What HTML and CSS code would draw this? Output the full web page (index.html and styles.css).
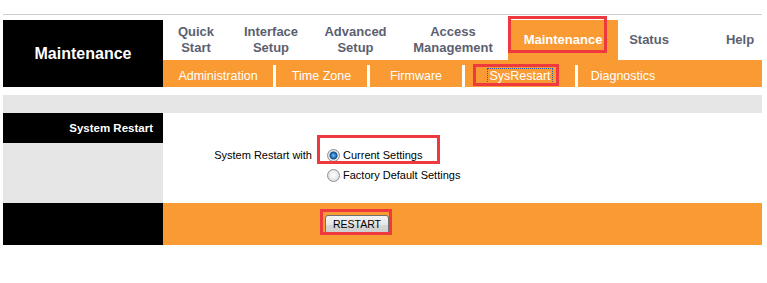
FILE: index.html
```html
<!DOCTYPE html>
<html>
<head>
<meta charset="utf-8">
<title>Maintenance</title>
<link rel="stylesheet" href="styles.css">
</head>
<body>
<div class="page">
  <div class="topline"></div>
  <div class="header">
    <div class="title">Maintenance</div>
    <div class="navcol">
      <div class="mainnav">
        <div class="tab t-quick">Quick<br>Start</div>
        <div class="tab t-iface">Interface<br>Setup</div>
        <div class="tab t-adv">Advanced<br>Setup</div>
        <div class="tab t-access">Access<br>Management</div>
        <div class="tab t-maint active">Maintenance</div>
        <div class="tab t-status">Status</div>
        <div class="spacer"></div>
        <div class="tab t-help">Help</div>
      </div>
      <div class="subnav">
        <div class="sub s-admin">Administration</div>
        <div class="sep"></div>
        <div class="sub s-time">Time Zone</div>
        <div class="sep"></div>
        <div class="sub s-fw">Firmware</div>
        <div class="sep"></div>
        <div class="sub s-sys"><span class="focus">SysRestart</span></div>
        <div class="sep"></div>
        <div class="sub s-diag">Diagnostics</div>
      </div>
    </div>
  </div>
  <div class="band"></div>
  <div class="section">
    <div class="sec-left"><div class="sec-title">System Restart</div></div>
    <div class="sec-right">
      <div class="form">
        <div class="lbl">System Restart with</div>
        <label class="opt"><input type="radio" name="rs" class="radio" checked><span>Current Settings</span></label>
        <div class="lbl"></div>
        <label class="opt"><input type="radio" name="rs" class="radio"><span>Factory Default Settings</span></label>
      </div>
    </div>
  </div>
  <div class="footer">
    <div class="foot-left"></div>
    <div class="foot-right"><button class="btn">RESTART</button></div>
  </div>
  <div class="mark m1"></div>
  <div class="mark m2"></div>
  <div class="mark m3"></div>
  <div class="mark m4"></div>
</div>
</body>
</html>
```
FILE: styles.css
```css
html, body {
  margin: 0;
  padding: 0;
  background: #fff;
}
body {
  font-family: "Liberation Sans", Arial, sans-serif;
}
.page {
  position: relative;
  margin-left: 3px;
  width: 759px;
  padding-top: 14px;
}
.topline {
  height: 1px;
  background: #cfcfcf;
  margin-bottom: 5px;
}
.header {
  display: flex;
  height: 67px;
}
.title {
  width: 160px;
  background: #000;
  color: #fff;
  font-weight: bold;
  font-size: 16px;
  display: flex;
  align-items: center;
  justify-content: center;
}
.navcol {
  flex: 1;
  display: flex;
  flex-direction: column;
}
.mainnav {
  height: 40px;
  display: flex;
}
.tab {
  display: flex;
  align-items: center;
  justify-content: center;
  text-align: center;
  font-weight: bold;
  font-size: 13px;
  line-height: 16px;
  color: #5c5f70;
}
.t-quick { width: 66px; }
.t-iface { width: 84px; }
.t-adv { width: 85px; }
.t-access { width: 110px; }
.t-maint { width: 110px; }
.t-status { width: 62px; }
.t-help { width: 44px; }
.spacer { flex: 1; }
.tab.active {
  background: #fa9a33;
  color: #fff;
}
.subnav {
  height: 27px;
  box-sizing: border-box;
  padding-top: 5px;
  background: #fa9a33;
  display: flex;
}
.sub {
  display: flex;
  align-items: center;
  justify-content: center;
  color: #fff;
  font-size: 12.5px;
}
.s-admin { width: 110px; }
.s-time { width: 91px; }
.s-fw { width: 92px; }
.s-sys { width: 110px; }
.s-diag { width: 90px; }
.sep {
  width: 3px;
  background: #fff;
}
.focus {
  outline: 1px dotted #2a5cb0;
  outline-offset: 0;
  padding: 0 1px;
}
.band {
  margin-top: 8px;
  height: 18px;
  background: #e6e6e6;
}
.section {
  display: flex;
  height: 90px;
}
.sec-left {
  width: 160px;
  background: #e6e6e6;
}
.sec-title {
  height: 30px;
  line-height: 30px;
  background: #000;
  color: #fff;
  font-weight: bold;
  font-size: 11.5px;
  text-align: right;
  padding-right: 10px;
}
.sec-right {
  flex: 1;
  padding-top: 32px;
  box-sizing: border-box;
}
.form {
  display: grid;
  grid-template-columns: 149px 1fr;
  column-gap: 14px;
  grid-auto-rows: 20px;
  font-size: 11px;
  color: #000;
}
.lbl {
  text-align: right;
  display: flex;
  align-items: center;
  justify-content: flex-end;
}
.opt {
  display: flex;
  align-items: center;
}
.radio {
  -webkit-appearance: none;
  appearance: none;
  width: 13px;
  height: 13px;
  margin: 0 3px 0 1px;
  border-radius: 50%;
  border: 1px solid #8e8f8f;
  box-sizing: border-box;
  background: radial-gradient(circle at 50% 45%, #ffffff 0, #f0f0f0 40%, #cfcfcf 100%);
}
.radio:checked {
  background: radial-gradient(circle at 50% 50%, #7fc4f4 0, #1f6fb6 2.5px, #12508a 3.5px, #e8e8e8 4.5px, #d0d0d0 100%);
}
.footer {
  display: flex;
  height: 42px;
}
.foot-left {
  width: 160px;
  background: #000;
}
.foot-right {
  flex: 1;
  background: #fa9a33;
  display: flex;
  align-items: center;
  padding-left: 162px;
}
.btn {
  width: 64px;
  height: 19px;
  padding: 0;
  font-family: "Liberation Sans", Arial, sans-serif;
  font-size: 10.5px;
  color: #000;
  border: 1px solid #707070;
  border-radius: 3px;
  background: linear-gradient(#f4f4f4, #e6e6e6 50%, #d6d6d6 51%, #cfcfcf);
}
.mark {
  position: absolute;
  border: 3px solid #ee3a3f;
  box-sizing: border-box;
}
.m1 { left: 505px; top: 16px; width: 99px; height: 37px; }
.m2 { left: 470px; top: 64px; width: 86px; height: 22px; }
.m3 { left: 314px; top: 135px; width: 123px; height: 29px; }
.m4 { left: 317px; top: 209px; width: 72px; height: 26px; }
```
